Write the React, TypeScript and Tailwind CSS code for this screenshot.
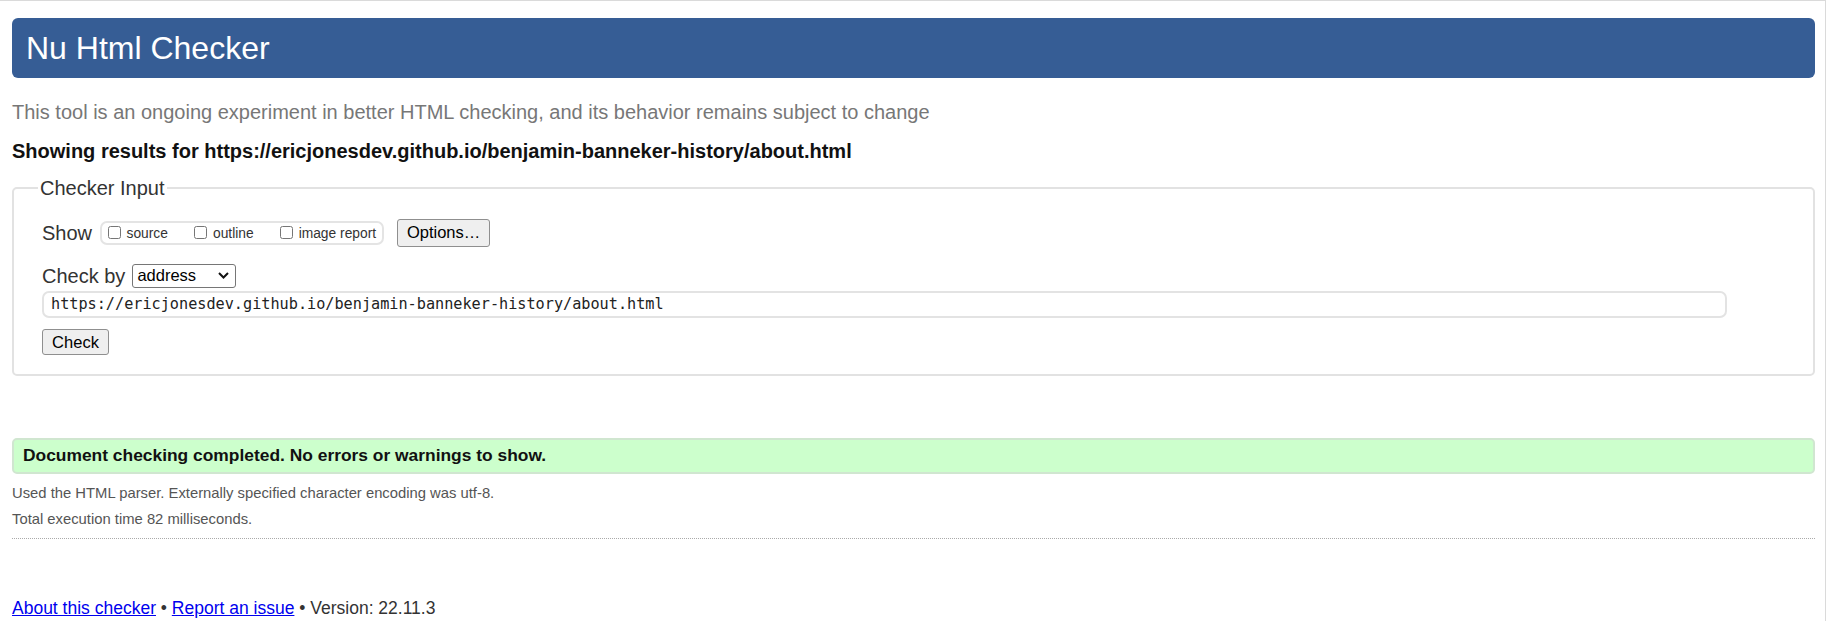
export default function App() {
  const url = 'https://ericjonesdev.github.io/benjamin-banneker-history/about.html'

  return (
    <div className="min-h-[621px] w-[1826px] border-t border-r border-[#dadada] bg-white pl-[12px] pr-[10px] font-['Liberation_Sans',Arial,sans-serif] text-[#333]">
      {/* Title bar */}
      <h1 className="mt-[16.5px] flex h-[60px] items-center rounded-[6px] bg-[#365d95] pl-[14px] text-[32px] leading-none text-white">
        Nu Html Checker
      </h1>

      <p className="mt-[22px] text-[20px] leading-[24px] text-[#777]">
        This tool is an ongoing experiment in better HTML checking, and its behavior remains subject to change
      </p>
      <p className="mt-[15px] text-[20px] font-bold leading-[24px] text-[#111]">
        Showing results for {url}
      </p>

      {/* Checker input */}
      <fieldset className="mt-[13px] rounded-[5px] border-2 border-[#e2e2e2] pl-[28px] pr-[28px] pt-[19px] pb-[19px]">
        <legend className="-ml-[4px] px-[2px] text-[20px] leading-[24px]">Checker Input</legend>

        <div className="flex h-[28px] items-center">
          <span className="text-[20px] leading-[24px]">Show</span>
          <div className="ml-[7.5px] flex h-[24px] items-center gap-[26px] rounded-[7px] border-2 border-[#e4e4e4] px-[6px]">
            {['source', 'outline', 'image report'].map((label) => (
              <label key={label} className="flex items-center gap-[6px] text-[13.8px] leading-[16px]">
                <input type="checkbox" className="h-[13px] w-[13px]" />
                <span className="mt-[3px]">{label}</span>
              </label>
            ))}
          </div>
          <button className="ml-[13px] h-[28px] w-[93px] rounded-[3px] border border-[#8f8f8f] bg-[#efefef] text-[16.5px] text-black">
            Options…
          </button>
        </div>

        <div className="mt-[17px] flex h-[24px] items-center">
          <span className="text-[20px] leading-[24px]">Check by</span>
          <div className="ml-[7px] flex h-[24px] w-[104px] items-center justify-between rounded-[3px] border border-[#767676] pl-[4px] pr-[6px] text-[16.5px] text-black">
            <span>address</span>
            <svg width="11" height="7" viewBox="0 0 11 7" fill="none">
              <path d="M1 1L5.5 5.5L10 1" stroke="#111" strokeWidth="2" />
            </svg>
          </div>
        </div>

        <div className="mt-[3px] flex h-[27px] w-[1685px] items-center rounded-[7px] border-2 border-[#e3e3e3] pl-[7px] font-['DejaVu_Sans_Mono',monospace] text-[15.2px] text-[#222]">
          {url}
        </div>

        <button className="mt-[11px] h-[26px] w-[67px] rounded-[3px] border border-[#8f8f8f] bg-[#efefef] text-[16.5px] text-black">
          Check
        </button>
      </fieldset>

      {/* Result */}
      <div className="mt-[62px] flex h-[36px] items-center rounded-[5px] border-2 border-[#d0e6d0] bg-[#ccffcc] pl-[9px] text-[17.4px] font-bold text-[#111]">
        Document checking completed. No errors or warnings to show.
      </div>
      <p className="mt-[6px] text-[14.8px] leading-[26px] text-[#555]">
        Used the HTML parser. Externally specified character encoding was utf-8.
      </p>
      <p className="text-[14.8px] leading-[26px] text-[#555]">Total execution time 82 milliseconds.</p>
      <hr className="mt-[6px] border-t border-dotted border-[#aaa]" />

      <p className="mt-[58px] text-[17.5px] leading-[22px] text-[#333]">
        <a href="#" className="text-[#0000ee] underline">About this checker</a>
        {' • '}
        <a href="#" className="text-[#0000ee] underline">Report an issue</a>
        {' • Version: 22.11.3'}
      </p>
    </div>
  )
}
